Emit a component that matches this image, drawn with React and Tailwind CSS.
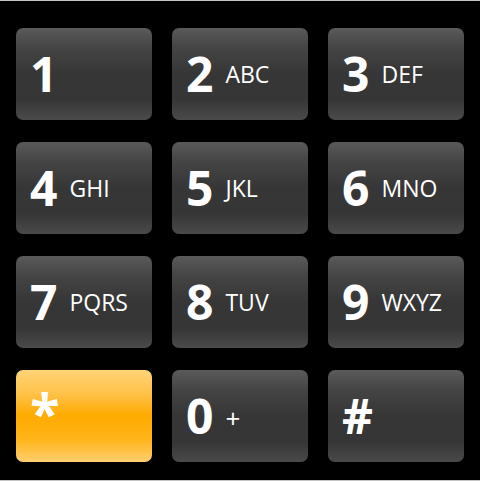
const keys = [
  ["1", ""],
  ["2", "ABC"],
  ["3", "DEF"],
  ["4", "GHI"],
  ["5", "JKL"],
  ["6", "MNO"],
  ["7", "PQRS"],
  ["8", "TUV"],
  ["9", "WXYZ"],
  ["*", ""],
  ["0", "+"],
  ["#", ""],
];

const Key = ({ digit, letters, active }) => {
  const face = active
    ? "bg-[linear-gradient(to_bottom,#ffd478_0%,#ffc24a_25%,#ffab00_50%,#ffb419_75%,#ffcf6e_100%)]"
    : "bg-[linear-gradient(to_bottom,#5a5a5a_0%,#444_22%,#363636_50%,#363636_78%,#4a4a4a_100%)]";
  return (
    <div className={`h-[92px] rounded-[7px] flex items-center pl-[14px] ${face}`}>
      <span
        className={`font-bold text-white leading-none ${digit === "*" ? "text-[54px] -mt-2" : "text-[48px]"}`}
      >
        {digit}
      </span>
      {letters && (
        <span className={`text-white leading-none ml-3 ${letters === "+" ? "text-[26px] mt-1" : "text-[23px] mt-0"}`}>
          {letters}
        </span>
      )}
    </div>
  );
};

export default function App() {
  return (
    <div className="w-[480px] h-[481px] bg-black border-y border-[#c4c4c4] font-['Open_Sans',sans-serif]">
      <div className="grid grid-cols-3 gap-x-5 gap-y-[22px] px-4 pt-[27px]">
        {keys.map(([d, l]) => (
          <Key key={d} digit={d} letters={l} active={d === "*"} />
        ))}
      </div>
    </div>
  );
}
